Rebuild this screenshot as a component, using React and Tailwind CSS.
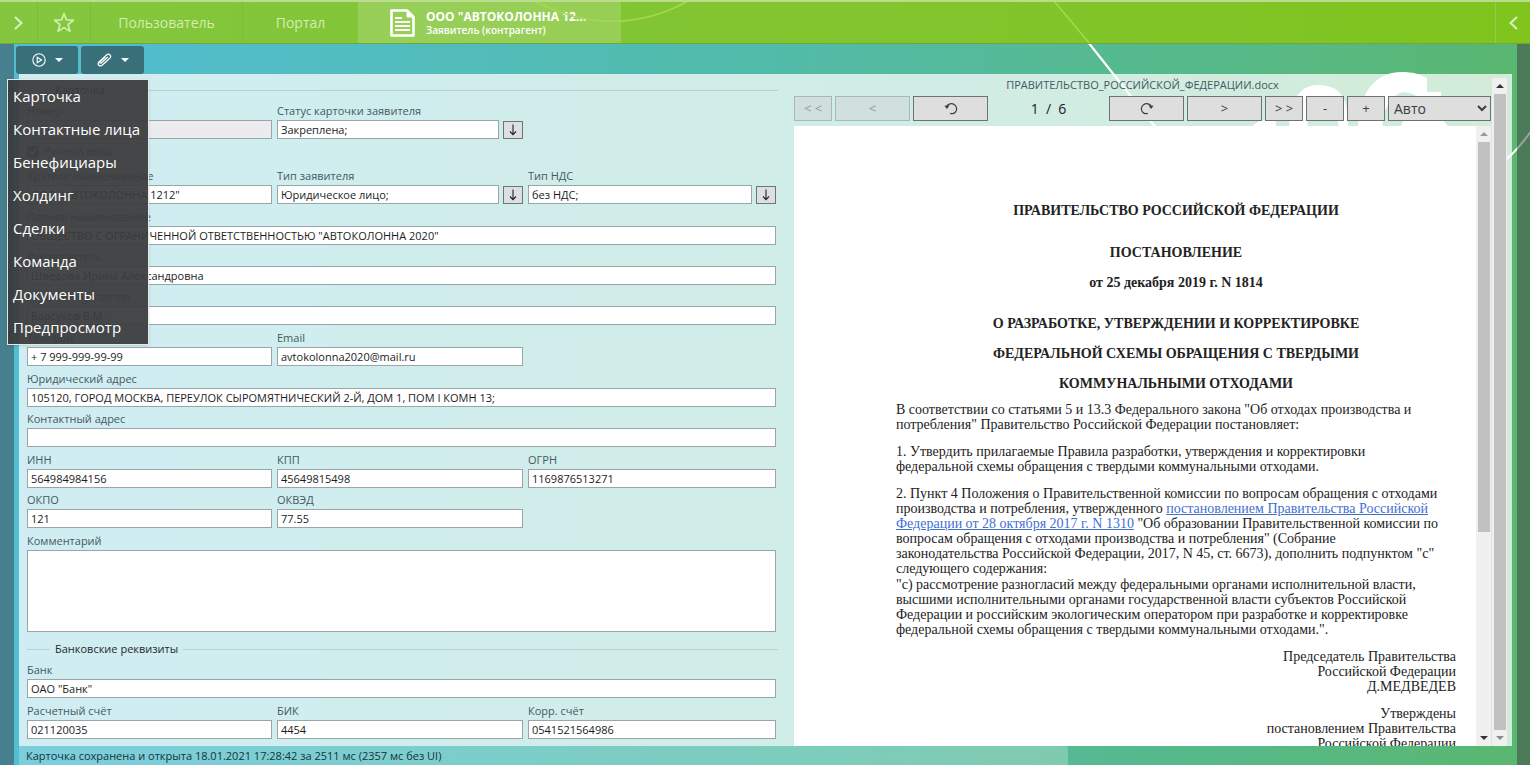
import { useId } from "react";

const menuItems = [
  "Карточка",
  "Контактные лица",
  "Бенефициары",
  "Холдинг",
  "Сделки",
  "Команда",
  "Документы",
  "Предпросмотр",
];

function Field({ label, value, picker = false, muted = false }) {
  const id = useId();
  return (
    <div className="min-w-0">
      <label htmlFor={id} className="block h-[21px] pt-[3px] text-[11px] leading-[18px] whitespace-nowrap text-[#46595f]">
        {label}
      </label>
      <div className="flex items-center gap-1">
        <input
          id={id}
          type="text"
          defaultValue={value}
          className={`h-[19px] w-full min-w-0 flex-1 border border-[#9aa5a9] px-[3px] text-[11px] text-[#1c1c1c] outline-none ${muted ? "bg-[#ececef]" : "bg-white"}`}
        />
        {picker && (
          <button
            type="button"
            aria-label={label}
            className="flex h-[18px] w-5 items-center justify-center border border-[#6d7578] bg-[#dedfe2]"
          >
            <svg width="8" height="12" viewBox="0 0 8 12" fill="none" stroke="#222" strokeWidth="1.1">
              <path d="M4 0.5V10.5M1 7.5L4 10.7L7 7.5" />
            </svg>
          </button>
        )}
      </div>
    </div>
  );
}

function Legend({ children }) {
  return (
    <div className="flex h-[18px] items-center">
      <span className="h-px w-[23px] bg-[#bccfd0]" />
      <h2 className="px-[5px] text-[11px] leading-[18px] text-[#1f2a2d]">{children}</h2>
      <span className="h-px flex-1 bg-[#bccfd0]" />
    </div>
  );
}

function Row({ children }) {
  return <div className="grid grid-cols-[245fr_246fr_248fr] gap-x-[5px]">{children}</div>;
}

function Caret() {
  return (
    <svg width="8" height="4" viewBox="0 0 8 4" fill="#fff">
      <path d="M0 0H8L4 4Z" />
    </svg>
  );
}

function ToolButton({ children, label, wide = false, disabled = false }) {
  return (
    <button
      type="button"
      aria-label={label}
      disabled={disabled}
      className={`flex h-[25px] items-center justify-center border text-[13px] ${wide ? "w-[75px]" : "w-[38px]"} ${
        disabled ? "border-[#a6b9b5] bg-[#d0e1dd] text-[#8b9b98]" : "border-[#6c7472] bg-[#dddedd] text-[#3b3f3f]"
      }`}
    >
      {children}
    </button>
  );
}

function RotateIcon({ flip = false }) {
  return (
    <svg width="14" height="13" viewBox="0 0 14 13" fill="none" className={flip ? "-scale-x-100" : ""}>
      <path d="M2.6 4.6C4 1.8 7.6 0.8 10.2 2.5C12.8 4.2 13.4 7.8 11.4 10.1C10 11.7 8 12 6.2 11.4" stroke="#3b3f3f" strokeWidth="1.2" />
      <path d="M0.4 3.8L5.4 3.4L3 7Z" fill="#3b3f3f" />
    </svg>
  );
}

function Scrollbar({ thumb, topTone, bottomTone }) {
  return (
    <div className="flex w-[15px] shrink-0 flex-col items-center bg-[#f0f0f0]" aria-hidden="true">
      <span className="flex h-4 items-center">
        <svg width="8" height="4" viewBox="0 0 8 4" fill={topTone}>
          <path d="M0 4H8L4 0Z" />
        </svg>
      </span>
      <span className={`w-3 bg-[#c1c1c1] ${thumb}`} />
      <span className="mt-auto flex h-4 items-center">
        <svg width="8" height="4" viewBox="0 0 8 4" fill={bottomTone}>
          <path d="M0 0H8L4 4Z" />
        </svg>
      </span>
    </div>
  );
}

function Header() {
  return (
    <header className="relative flex h-11 shrink-0 items-stretch border-t-2 border-b border-t-[#b9dd8c] border-b-[#6fa838] bg-linear-to-r from-[#84c63e] to-[#80c41d] text-[#d3edb2]">
      <svg className="absolute inset-0 h-full w-full" aria-hidden="true" fill="none">
        <path d="M535 -1C585 26 640 26 688 -1" stroke="#a9d850" strokeWidth="1.5" />
        <path d="M1054 -1L1090 42" stroke="#a9d850" strokeWidth="1.5" />
      </svg>
      <button type="button" aria-label="Развернуть" className="flex w-[38px] items-center justify-center border-r border-[#7cbb3c]">
        <svg width="9" height="14" viewBox="0 0 9 14" fill="none" stroke="#d8f0bb" strokeWidth="2.2">
          <path d="M1 1L7.5 7L1 13" />
        </svg>
      </button>
      <button type="button" aria-label="Избранное" className="flex w-[53px] items-center justify-center border-r border-[#7cbb3c]">
        <svg width="22" height="21" viewBox="0 0 22 21" fill="none" stroke="#cdebaa" strokeWidth="1.8" strokeLinejoin="round">
          <path d="M11 1.6L13.5 7.8L20.4 8.2L15.1 12.5L16.9 19.2L11 15.5L5.1 19.2L6.9 12.5L1.6 8.2L8.5 7.8Z" />
        </svg>
      </button>
      <nav className="flex items-stretch text-sm">
        <a href="#user" className="flex w-[152px] items-center justify-center border-r border-[#7cbb3c]">
          Пользователь
        </a>
        <a href="#portal" className="flex w-[115px] items-center justify-center">
          Портал
        </a>
        <a href="#card" className="flex w-[263px] items-center gap-[11px] bg-[#ffffff2b] pl-8 text-white">
          <svg width="25" height="28" viewBox="0 0 25 28" fill="none" stroke="#fff">
            <path d="M1.5 1.5H17L23.5 8V26.5H1.5Z" strokeWidth="2.6" strokeLinejoin="round" />
            <path d="M17 1V8H24Z" fill="#fff" />
            <path d="M5 9H12M5 13H20M5 17H20M5 21H20" strokeWidth="1.8" />
          </svg>
          <span className="flex flex-col">
            <span className="text-xs leading-[15px] font-bold">ООО "АВТОКОЛОННА 12...</span>
            <span className="text-[10px] leading-[13px] font-semibold">Заявитель (контрагент)</span>
          </span>
        </a>
      </nav>
      <button type="button" aria-label="Свернуть" className="ml-auto flex w-[35px] items-center justify-center border-l border-[#98c94a]">
        <svg width="9" height="14" viewBox="0 0 9 14" fill="none" stroke="#d8f0bb" strokeWidth="2.2">
          <path d="M8 1L1.5 7L8 13" />
        </svg>
      </button>
    </header>
  );
}

function Toolbar() {
  return (
    <div className="relative z-10 flex h-[30px] shrink-0 items-stretch gap-[3px] pt-[2px] pl-[2px]">
      <button type="button" aria-label="Разделы" className="flex w-[62px] items-center justify-center gap-[9px] rounded-[3px] bg-[#38707a]">
        <svg width="14" height="14" viewBox="0 0 14 14" fill="none" stroke="#fff" strokeWidth="1.1">
          <circle cx="7" cy="7" r="6.2" />
          <path d="M5.2 4.2L9.6 7L5.2 9.8Z" />
        </svg>
        <Caret />
      </button>
      <button type="button" aria-label="Вложения" className="flex w-[63px] items-center justify-center gap-[9px] rounded-[3px] bg-[#38707a]">
        <svg width="15" height="14" viewBox="0 0 15 14" fill="none" stroke="#fff" strokeWidth="1.2" strokeLinecap="round">
          <path d="M4.5 9.8L10.6 4.3M5.4 12L12.8 5.3C15 3 12.2 0 9.8 1.8L2.2 8.6C-0.4 11.4 2.6 14.4 5.4 12ZM4.5 9.8C3.2 10.8 2.2 9.6 3.4 8.4L8 4.2" />
        </svg>
        <Caret />
      </button>
      <div role="menu" className="absolute top-[35px] -left-[7px] w-[142px] border border-[#e4e8e8] bg-[#3a3c3df0] shadow">
        {menuItems.map((item) => (
          <a key={item} role="menuitem" href="#section" className="flex h-[33px] items-center pb-px pl-[5px] text-[15px] whitespace-nowrap text-white">
            {item}
          </a>
        ))}
      </div>
    </div>
  );
}

function CardForm() {
  const commentId = useId();
  return (
    <form className="min-w-0 pt-[7px] pr-4 pl-2">
      <Legend>Карточка</Legend>
      <div className="flex flex-col gap-px pr-[2px]">
        <Row>
          <Field label="Номер" value="" muted />
          <Field label="Статус карточки заявителя" value="Закреплена;" picker />
        </Row>
        <label className="flex h-[23px] items-center gap-[5px] text-[11px] text-[#46595f]">
          <input type="checkbox" defaultChecked className="size-3 accent-[#6b7376]" />
          Ручной ввод
        </label>
        <Row>
          <Field label="Краткое наименование" value={'ООО "АВТОКОЛОННА 1212"'} />
          <Field label="Тип заявителя" value="Юридическое лицо;" picker />
          <Field label="Тип НДС" value="без НДС;" picker />
        </Row>
        <div>
          <Field label="Полное наименование" value={'ОБЩЕСТВО С ОГРАНИЧЕННОЙ ОТВЕТСТВЕННОСТЬЮ "АВТОКОЛОННА 2020"'} />
          <Field label="Руководитель" value="Шведова Ирина Александровна" />
          <Field label="Главный бухгалтер" value="Барсуков В.М." />
        </div>
        <Row>
          <Field label="Телефон" value="+ 7 999-999-99-99" />
          <Field label="Email" value="avtokolonna2020@mail.ru" />
        </Row>
        <div>
          <Field label="Юридический адрес" value="105120, ГОРОД МОСКВА, ПЕРЕУЛОК СЫРОМЯТНИЧЕСКИЙ 2-Й, ДОМ 1, ПОМ I КОМН 13;" />
          <Field label="Контактный адрес" value="" />
        </div>
        <div>
          <Row>
            <Field label="ИНН" value="564984984156" />
            <Field label="КПП" value="45649815498" />
            <Field label="ОГРН" value="1169876513271" />
          </Row>
          <Row>
            <Field label="ОКПО" value="121" />
            <Field label="ОКВЭД" value="77.55" />
          </Row>
        </div>
        <div>
          <label htmlFor={commentId} className="block h-[21px] pt-[3px] text-[11px] leading-[18px] text-[#46595f]">
            Комментарий
          </label>
          <textarea id={commentId} className="block h-[82px] w-full resize-none border border-[#9aa5a9] bg-white px-[3px] text-[11px]" />
        </div>
      </div>
      <div className="mt-2">
        <Legend>Банковские реквизиты</Legend>
      </div>
      <div className="flex flex-col gap-px pr-[2px]">
        <Field label="Банк" value={'ОАО "Банк"'} />
        <Row>
          <Field label="Расчетный счёт" value="021120035" />
          <Field label="БИК" value="4454" />
          <Field label="Корр. счёт" value="0541521564986" />
        </Row>
      </div>
    </form>
  );
}

function Viewer() {
  return (
    <section className="flex min-h-0 min-w-0 gap-px pr-[5px]">
      <div className="flex min-h-0 min-w-0 flex-1 flex-col">
        <h1 className="h-[22px] pt-[2px] text-center text-[11px] leading-[18px] text-[#46595f]">ПРАВИТЕЛЬСТВО_РОССИЙСКОЙ_ФЕДЕРАЦИИ.docx</h1>
        <div className="flex h-[30px] shrink-0 items-start gap-[3px]">
          <ToolButton label="Первая страница" disabled>&lt; &lt;</ToolButton>
          <ToolButton label="Предыдущая страница" wide disabled>&lt;</ToolButton>
          <ToolButton label="Повернуть влево" wide><RotateIcon /></ToolButton>
          <span className="flex-1 text-center text-sm leading-[25px] text-[#16211f]">1&nbsp; /&nbsp; 6</span>
          <ToolButton label="Повернуть вправо" wide><RotateIcon flip /></ToolButton>
          <ToolButton label="Следующая страница" wide>&gt;</ToolButton>
          <ToolButton label="Последняя страница">&gt; &gt;</ToolButton>
          <ToolButton label="Уменьшить">-</ToolButton>
          <ToolButton label="Увеличить">+</ToolButton>
          <select aria-label="Масштаб" className="h-[25px] w-[103px] border border-[#6c7472] bg-[#dddedd] pl-px text-sm text-[#3b3f3f]">
            <option>Авто</option>
          </select>
        </div>
        <div className="flex min-h-0 flex-1 overflow-hidden bg-white">
          <article className="min-w-0 flex-1 pt-[70px] pr-5 pl-[102px] font-['Liberation_Serif',serif] text-[14px] leading-[15px] text-[#222]">
            <div className="text-center leading-[30px] font-bold whitespace-nowrap">
              <p>ПРАВИТЕЛЬСТВО РОССИЙСКОЙ ФЕДЕРАЦИИ</p>
              <p className="mt-3">ПОСТАНОВЛЕНИЕ</p>
              <p>от 25 декабря 2019 г. N 1814</p>
              <p className="mt-[11px]">
                О РАЗРАБОТКЕ, УТВЕРЖДЕНИИ И КОРРЕКТИРОВКЕ
                <br />
                ФЕДЕРАЛЬНОЙ СХЕМЫ ОБРАЩЕНИЯ С ТВЕРДЫМИ
                <br />
                КОММУНАЛЬНЫМИ ОТХОДАМИ
              </p>
            </div>
            <div className="mt-[3px] flex flex-col gap-3 whitespace-nowrap">
              <p>
                В соответствии со статьями 5 и 13.3 Федерального закона "Об отходах производства и
                <br />
                потребления" Правительство Российской Федерации постановляет:
              </p>
              <p>
                1. Утвердить прилагаемые Правила разработки, утверждения и корректировки
                <br />
                федеральной схемы обращения с твердыми коммунальными отходами.
              </p>
              <div className="flex flex-col gap-px">
                <p>
                  2. Пункт 4 Положения о Правительственной комиссии по вопросам обращения с отходами
                  <br />
                  производства и потребления, утвержденного{" "}
                  <a href="#decree" className="text-[#3f6fd0] underline">
                    постановлением Правительства Российской
                    <br />
                    Федерации от 28 октября 2017 г. N 1310
                  </a>{" "}
                  "Об образовании Правительственной комиссии по
                  <br />
                  вопросам обращения с отходами производства и потребления" (Собрание
                  <br />
                  законодательства Российской Федерации, 2017, N 45, ст. 6673), дополнить подпунктом "с"
                  <br />
                  следующего содержания:
                </p>
                <p>
                  "с) рассмотрение разногласий между федеральными органами исполнительной власти,
                  <br />
                  высшими исполнительными органами государственной власти субъектов Российской
                  <br />
                  Федерации и российским экологическим оператором при разработке и корректировке
                  <br />
                  федеральной схемы обращения с твердыми коммунальными отходами.".
                </p>
              </div>
              <p className="text-right">
                Председатель Правительства
                <br />
                Российской Федерации
                <br />
                Д.МЕДВЕДЕВ
              </p>
              <p className="text-right">
                Утверждены
                <br />
                постановлением Правительства
                <br />
                Российской Федерации
              </p>
            </div>
          </article>
          <Scrollbar thumb="h-[390px]" topTone="#9a9a9a" bottomTone="#333" />
        </div>
      </div>
      <div className="flex pt-1">
        <Scrollbar thumb="flex-1" topTone="#333" bottomTone="#8a8a8a" />
      </div>
    </section>
  );
}

function Backdrop() {
  return (
    <svg className="absolute inset-0 -z-10 h-full w-full" aria-hidden="true" fill="none">
      <path d="M1088 42L1156 128" stroke="#fff" strokeWidth="2.2" />
      <path d="M1500 164C1512 156 1522 144 1532 130" stroke="#fff" strokeWidth="2" />
      <g fill="#fff">
        <path d="M1253 126C1258 119 1270 118 1276 122V140H1262V126Z" />
        <path d="M1290 140C1286 106 1298 85 1317 85C1334 85 1342 92 1346 104L1350 140H1340C1340 116 1332 104 1318 104C1310 104 1306 116 1308 140Z" />
        <path d="M1358 140C1356 94 1374 72 1402 72C1412 72 1420 74 1427 78V92H1441V100C1436 112 1444 122 1448 126V140H1398C1398 128 1408 110 1418 98C1412 91 1400 90 1394 97C1384 108 1380 120 1384 140Z" />
      </g>
    </svg>
  );
}

export default function App() {
  return (
    <div className="relative isolate flex h-screen flex-col overflow-hidden bg-linear-to-r from-[#52bed3] via-[#52bba9] via-50% to-[#5ab770] font-['Open_Sans','Noto_Sans',sans-serif]">
      <Backdrop />
      <Header />
      <div className="flex min-h-0 flex-1">
        <div className="w-[14px] shrink-0 bg-[#467f8d]" />
        <div className="flex min-w-0 flex-1 flex-col">
          <Toolbar />
          <main className="mx-[5px] grid min-h-0 min-w-0 flex-1 grid-cols-[775fr_718fr] grid-rows-[minmax(0,1fr)] bg-[#ffffffba]">
            <CardForm />
            <Viewer />
          </main>
          <footer className="h-[19px] shrink-0 pl-[5px]">
            <p className="h-full w-[70%] rounded-tr-[3px] bg-[#ffffff40] pt-px pl-[7px] text-[11px] leading-[18px] text-[#12343c]">
              Карточка сохранена и открыта 18.01.2021 17:28:42 за 2511 мс (2357 мс без UI)
            </p>
          </footer>
        </div>
        <div className="w-[13px] shrink-0 bg-[#3c3f42]/50" />
      </div>
    </div>
  );
}
